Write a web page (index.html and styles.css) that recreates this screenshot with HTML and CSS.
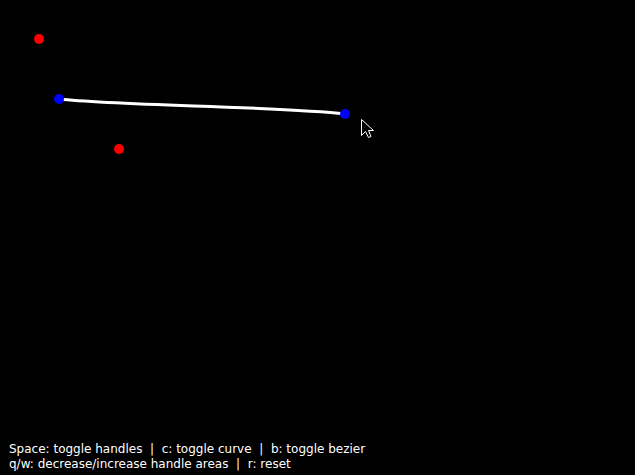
FILE: index.html
```html
<!DOCTYPE html>
<html>
<head>
<meta charset="utf-8">
<link rel="stylesheet" href="styles.css">
</head>
<body>
<div class="screen">
  <svg class="canvas" width="635" height="440" viewBox="0 0 635 440">
    <path d="M59 99 C 120 106, 280 106, 345 114" fill="none" stroke="#ffffff" stroke-width="3"/>
    <circle cx="39" cy="39" r="5" fill="#ff0000"/>
    <circle cx="119" cy="149" r="5" fill="#ff0000"/>
    <circle cx="59" cy="99" r="5" fill="#0000ff"/>
    <circle cx="345" cy="114" r="5" fill="#0000ff"/>
    <path d="M361.5 119.5 L361.5 135.5 L365.5 131.5 L368.5 137.5 L371 136.5 L368.5 130.5 L373.5 130.5 Z" fill="#000" stroke="#fff" stroke-width="1"/>
  </svg>
  <div class="help">
    <div class="line">Space: toggle handles&nbsp; |&nbsp; c: toggle curve&nbsp; |&nbsp; b: toggle bezier</div>
    <div class="line">q/w: decrease/increase handle areas&nbsp; |&nbsp; r: reset</div>
  </div>
</div>
</body>
</html>
```

FILE: styles.css
```css
html, body {
  margin: 0;
  padding: 0;
  background: #000;
}
.screen {
  width: 635px;
  height: 475px;
  display: flex;
  flex-direction: column;
  background: #000;
  overflow: hidden;
}
.canvas {
  display: block;
  flex: none;
}
.help {
  padding: 2px 0 0 9px;
  color: #fff;
  font-family: "DejaVu Sans", sans-serif;
  font-size: 12px;
  line-height: 15px;
  white-space: nowrap;
}
```
